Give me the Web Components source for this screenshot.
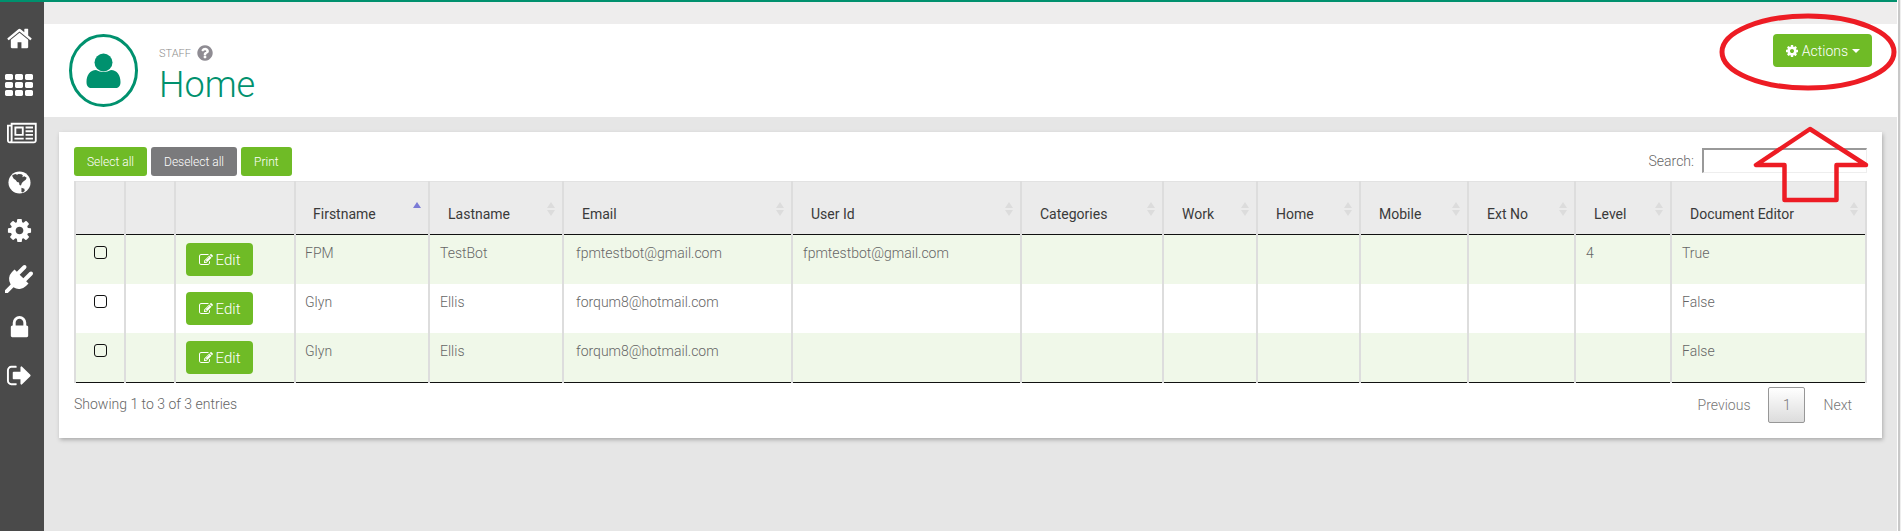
<!DOCTYPE html>
<html>
<head>
<meta charset="utf-8">
<title>Staff</title>
<style>
  html, body {
    margin: 0;
    height: 100%;
    overflow: hidden;
  }
  body {
    color: #666;
    font-family: Roboto, "Liberation Sans", sans-serif;
    font-size: 14px;
    font-weight: 300;
  }
</style>
</head>
<body>
<staff-app></staff-app>

<script>
const ICONS = {
  home: 'M1472 992v480q0 26-19 45t-45 19h-384v-384h-256v384h-384q-26 0-45-19t-19-45v-480q0-1 .5-3t.5-3l575-474 575 474q1 2 1 6zm223-69l-62 74q-8 9-21 11h-3q-13 0-21-7l-692-577-692 577q-12 8-24 7-13-2-21-11l-62-74q-8-10-7-23.5t11-21.5l719-599q32-26 76-26t76 26l244 204v-195q0-14 9-23t23-9h192q14 0 23 9t9 23v408l219 182q10 8 11 21.5t-7 23.5z',
  th: 'M512 1248v192q0 40-28 68t-68 28h-320q-40 0-68-28t-28-68v-192q0-40 28-68t68-28h320q40 0 68 28t28 68zm0-512v192q0 40-28 68t-68 28h-320q-40 0-68-28t-28-68v-192q0-40 28-68t68-28h320q40 0 68 28t28 68zm640 512v192q0 40-28 68t-68 28h-320q-40 0-68-28t-28-68v-192q0-40 28-68t68-28h320q40 0 68 28t28 68zm-640-1024v192q0 40-28 68t-68 28h-320q-40 0-68-28t-28-68v-192q0-40 28-68t68-28h320q40 0 68 28t28 68zm640 512v192q0 40-28 68t-68 28h-320q-40 0-68-28t-28-68v-192q0-40 28-68t68-28h320q40 0 68 28t28 68zm640 512v192q0 40-28 68t-68 28h-320q-40 0-68-28t-28-68v-192q0-40 28-68t68-28h320q40 0 68 28t28 68zm-640-1024v192q0 40-28 68t-68 28h-320q-40 0-68-28t-28-68v-192q0-40 28-68t68-28h320q40 0 68 28t28 68zm640 512v192q0 40-28 68t-68 28h-320q-40 0-68-28t-28-68v-192q0-40 28-68t68-28h320q40 0 68 28t28 68zm0-512v192q0 40-28 68t-68 28h-320q-40 0-68-28t-28-68v-192q0-40 28-68t68-28h320q40 0 68 28t28 68z',
  news: 'M1024 512h-384v384h384v-384zm128 640v128h-640v-128h640zm0-768v640h-640v-640h640zm640 768v128h-512v-128h512zm0-256v128h-512v-128h512zm0-256v128h-512v-128h512zm0-256v128h-512v-128h512zm-1536 960v-960h-128v960q0 26 19 45t45 19 45-19 19-45zm1664 0v-1088h-1536v1088q0 33-11 64h1483q26 0 45-19t19-45zm128-1216v1216q0 80-56 136t-136 56h-1664q-80 0-136-56t-56-136v-1088h256v-128h1792z',
  cog: 'M1152 896q0-106-75-181t-181-75-181 75-75 181 75 181 181 75 181-75 75-181zm512-109v222q0 12-8 23t-20 13l-185 28q-19 54-39 91 35 50 107 138 10 12 10 25t-9 23q-27 37-99 108t-94 71q-12 0-26-9l-138-108q-44 23-91 38-16 136-29 186-7 28-36 28h-222q-14 0-24.5-8.5t-11.5-21.5l-28-184q-49-16-90-37l-141 107q-10 9-25 9-14 0-25-11-126-114-165-168-7-10-7-23 0-12 8-23 15-21 51-66.5t54-70.5q-27-50-41-99l-183-27q-13-2-21-12.5t-8-23.5v-222q0-12 8-23t19-13l186-28q14-46 39-92-40-57-107-138-10-12-10-24 0-10 9-23 26-36 98.5-107.5t94.5-71.5q13 0 26 10l138 107q44-23 91-38 16-136 29-186 7-28 36-28h222q14 0 24.5 8.5t11.5 21.5l28 184q49 16 90 37l142-107q9-9 24-9 13 0 25 10 129 119 165 170 7 8 7 22 0 12-8 23-15 21-51 66.5t-54 70.5q26 50 41 98l183 28q13 2 21 12.5t8 23.5z',
  plug: 'M1755 453q37 38 37 90.5t-37 90.5l-401 400 150 150-160 160q-163 163-389.5 186.5t-411.5-100.5l-362 362h-181v-181l362-362q-124-185-100.5-411.5t186.5-389.5l160-160 150 150 400-401q38-37 91-37t90 37 37 90.5-37 90.5l-400 401 234 234 401-400q38-37 91-37t90 37z',
  lock: 'M640 768h512v-192q0-106-75-181t-181-75-181 75-75 181v192zm832 96v576q0 40-28 68t-68 28h-960q-40 0-68-28t-28-68v-576q0-40 28-68t68-28h32v-192q0-184 132-316t316-132 316 132 132 316v192h32q40 0 68 28t28 68z',
  signout: 'M704 1440q0 4 1 20t.5 26.5-3 23.5-10 19.5-20.5 6.5h-320q-119 0-203.5-84.5t-84.5-203.5v-704q0-119 84.5-203.5t203.5-84.5h320q13 0 22.5 9.5t9.5 22.5q0 4 1 20t.5 26.5-3 23.5-10 19.5-20.5 6.5h-320q-66 0-113 47t-47 113v704q0 66 47 113t113 47h312l11.5 1 11.5 3 8 5.5 7 9 2 13.5zm928-544q0 26-19 45l-544 544q-19 19-45 19t-45-19-19-45v-288h-448q-26 0-45-19t-19-45v-384q0-26 19-45t45-19h448v-288q0-26 19-45t45-19 45 19l544 544q19 19 19 45z',
  question: 'M1024 1376v-192q0-14-9-23t-23-9h-192q-14 0-23 9t-9 23v192q0 14 9 23t23 9h192q14 0 23-9t9-23zm256-672q0-88-55.5-163t-138.5-116-170-41q-243 0-371 213-15 24 8 42l132 100q7 6 19 6 16 0 25-12 53-68 86-92 34-24 86-24 48 0 85.5 26t37.5 59q0 38-20 61t-68 45q-63 28-115.5 86.5t-52.5 125.5v36q0 14 9 23t23 9h192q14 0 23-9t9-23q0-19 21.5-49.5t54.5-49.5q32-18 49-28.5t46-35 44.5-48 28-60.5 12.5-81zm384 192q0 209-103 385.5t-279.5 279.5-385.5 103-385.5-103-279.5-279.5-103-385.5 103-385.5 279.5-279.5 385.5-103 385.5 103 279.5 279.5 103 385.5z',
  edit: 'M888 1184l116-116-152-152-116 116v56h96v96h56zm440-720q-16-16-33 1l-350 350q-17 17-1 33t33-1l350-350q17-17 1-33zm80 594v190q0 119-84.5 203.5t-203.5 84.5h-832q-119 0-203.5-84.5t-84.5-203.5v-832q0-119 84.5-203.5t203.5-84.5h832q63 0 117 25 15 7 18 23 3 17-9 29l-49 49q-14 14-32 8-23-6-45-6h-832q-66 0-113 47t-47 113v832q0 66 47 113t113 47h832q66 0 113-47t47-113v-126q0-13 9-22l64-64q15-15 35-7t20 29zm-96-738l288 288-672 672h-288v-288zm444 132l-92 92-288-288 92-92q28-28 68-28t68 28l152 152q28 28 28 68t-28 68z',
};

function icon(name, size, width) {
  const w = width || 1792;
  return `<svg viewBox="0 0 ${w} 1792" width="${size * w / 1792}" height="${size}" fill="currentColor"><path d="${ICONS[name]}"/></svg>`;
}

// white disc with a dark north america on it
const GLOBE = `<svg viewBox="0 0 24 24" width="23" height="23">
  <circle cx="12" cy="12" r="11.500" fill="#fff"/>
  <path fill="#4a4a4a" d="M4.500 4.500l3-1.500 2 1 1.500-1 3 .5 1.500 1-.5 2 2-1 2.500 1.500-1 2-2.500 2-1.500 1.500-1 2.500-1.500-.5-.5-2.500-2-.5-1.500-2-2-1.500-1.500-2.500z"/>
  <path fill="#4a4a4a" d="M14 17.500l3 1 .5 2-2 2-1.500-.5z"/>
</svg>`;

class StaffSidebar extends HTMLElement {
  constructor() {
    super();
    const items = [
      icon('home', 27),
      icon('th', 28),
      icon('news', 26, 2048),
      GLOBE,
      icon('cog', 27),
      icon('plug', 28),
      icon('lock', 27),
      icon('signout', 27),
    ];
    this.attachShadow({mode: 'open'}).innerHTML = `
      <style>
        :host {
          background: #4a4a4a;
          box-sizing: border-box;
          color: #fff;
          display: flex;
          flex: 0 0 44px;
          flex-direction: column;
          padding: 12px 6px 0 0;
        }
        a {
          align-items: center;
          display: flex;
          height: 48.2px;
          justify-content: center;
        }
        a:nth-child(4) svg {
          margin-left: 6px;
        }
      </style>
      ${items.map(i => `<a>${i}</a>`).join('')}
    `;
  }
}
customElements.define('staff-sidebar', StaffSidebar);

class GreenButton extends HTMLElement {
  constructor() {
    super();
    this.attachShadow({mode: 'open'}).innerHTML = `
      <style>
        :host {
          align-items: center;
          background: #6fbb26;
          border-radius: 3px;
          box-sizing: border-box;
          color: #fff;
          display: inline-flex;
          font-size: 12px;
          font-weight: 300;
          gap: 4px;
          height: 29px;
          justify-content: center;
          padding: 0 13px;
          white-space: nowrap;
        }
        :host([gray]) {
          background: #7a7a7c;
        }
        :host([big]) {
          border-radius: 4px;
          font-size: 14px;
          height: 33px;
          padding: 0;
        }
      </style>
      <slot></slot>
    `;
  }
}
customElements.define('green-button', GreenButton);

class PageHeader extends HTMLElement {
  constructor() {
    super();
    this.attachShadow({mode: 'open'}).innerHTML = `
      <style>
        :host {
          align-items: flex-start;
          background: #fff;
          box-sizing: border-box;
          display: flex;
          height: 93px;
          padding: 10px 25px 0 25px;
        }
        .avatar {
          flex: none;
          margin-right: 21px;
        }
        .titles {
          flex: 1;
          padding-top: 11px;
        }
        .kicker {
          align-items: center;
          color: #8c8c8c;
          display: flex;
          font-size: 11px;
          gap: 5px;
          height: 16px;
        }
        .kicker svg {
          color: #8f8c93;
        }
        h1 {
          color: #00916e;
          font-size: 36px;
          font-weight: 300;
          line-height: 42px;
          margin: 3px 0 0 0;
        }
        green-button {
          gap: 3px;
          width: 99px;
        }
        svg {
          display: block;
        }
        .caret {
          border-left: 4px solid transparent;
          border-right: 4px solid transparent;
          border-top: 4px solid #fff;
          margin-left: 1px;
        }
      </style>
      <svg class="avatar" viewBox="0 0 69 73" width="69" height="73">
        <ellipse cx="34.500" cy="36.500" rx="33" ry="35" fill="none" stroke="#00916e" stroke-width="3"/>
        <circle cx="34.500" cy="28.500" r="9" fill="#00916e"/>
        <path fill="#00916e" d="M27 36q7.500 4 15 0c6 0 9.500 5 9.500 12 0 4-2 6-5 6h-24c-3 0-5-2-5-6 0-7 3.500-12 9.500-12z"/>
      </svg>
      <div class="titles">
        <div class="kicker"><span>STAFF</span>${icon('question', 18)}</div>
        <h1>Home</h1>
      </div>
      <green-button big>${icon('cog', 14)}<span>Actions</span><span class="caret"></span></green-button>
    `;
  }
}
customElements.define('page-header', PageHeader);

const COLUMNS = [
  ['', 50], ['', 50], ['', 120],
  ['Firstname', 134], ['Lastname', 134], ['Email', 229], ['User Id', 229],
  ['Categories', 142], ['Work', 94], ['Home', 103], ['Mobile', 108],
  ['Ext No', 107], ['Level', 96], ['Document Editor', 195],
];

const ROWS = [
  ['FPM', 'TestBot', 'fpmtestbot@gmail.com', 'fpmtestbot@gmail.com', '', '', '', '', '', '4', 'True'],
  ['Glyn', 'Ellis', 'forqum8@hotmail.com', '', '', '', '', '', '', '', 'False'],
  ['Glyn', 'Ellis', 'forqum8@hotmail.com', '', '', '', '', '', '', '', 'False'],
];

class StaffTable extends HTMLElement {
  constructor() {
    super();
    const head = COLUMNS.map(([label], i) => {
      if (!label) return '<th></th>';
      const cls = i == 3 ? 'sort asc' : 'sort';
      return `<th class="${cls}">${label}</th>`;
    }).join('');
    const body = ROWS.map(row => `
      <tr>
        <td class="check"><input type="checkbox"></td>
        <td></td>
        <td class="action"><green-button big>${icon('edit', 14)}<span>Edit</span></green-button></td>
        ${row.map(v => `<td>${v}</td>`).join('')}
      </tr>`).join('');
    this.attachShadow({mode: 'open'}).innerHTML = `
      <style>
        :host {
          display: block;
        }
        table {
          border-bottom: 1px solid #111;
          border-collapse: collapse;
          table-layout: fixed;
          width: 1793px;
        }
        th {
          background: #ebebeb;
          border-bottom: 1px solid #111;
          border-left: 2px solid #ddd;
          border-top: 1px solid #e2e2e2;
          box-sizing: border-box;
          color: #3a3a3a;
          font-weight: 400;
          height: 53px;
          padding: 12px 18px 0 18px;
          position: relative;
          text-align: left;
        }
        th:last-child, td:last-child {
          border-right: 2px solid #ddd;
        }
        th.sort::before, th.sort::after {
          border-left: 4px solid transparent;
          border-right: 4px solid transparent;
          content: '';
          position: absolute;
          right: 7px;
        }
        th.sort::before {
          border-bottom: 6px solid #dcdcdc;
          top: 20px;
        }
        th.sort::after {
          border-top: 6px solid #dcdcdc;
          top: 28px;
        }
        th.asc::before {
          border-bottom-color: #7b7bd6;
        }
        th.asc::after {
          display: none;
        }
        td {
          border-left: 2px solid #ddd;
          box-sizing: border-box;
          height: 49px;
          line-height: 20px;
          padding: 8px 10px;
          vertical-align: top;
        }
        td:nth-child(4) {
          padding-left: 9px;
        }
        th:nth-child(4) {
          padding-left: 17px;
        }
        td:nth-child(6) {
          padding-left: 12px;
        }
        tr:nth-child(odd) td {
          background: #f0f8e9;
        }
        td.action green-button {
          gap: 3px;
          width: 67px;
        }
        td.action span {
          font-size: 15px;
        }
        svg {
          display: block;
        }
        td.check {
          padding: 11px 0 0 18px;
        }
        input {
          appearance: none;
          border: 1.500px solid #111;
          border-radius: 3px;
          box-sizing: border-box;
          display: block;
          height: 13px;
          margin: 0;
          width: 13px;
        }
      </style>
      <table>
        <colgroup>${COLUMNS.map(c => `<col style="width:${c[1]}px">`).join('')}</colgroup>
        <thead><tr>${head}</tr></thead>
        <tbody>${body}</tbody>
      </table>
    `;
  }
}
customElements.define('staff-table', StaffTable);

class StaffCard extends HTMLElement {
  constructor() {
    super();
    this.attachShadow({mode: 'open'}).innerHTML = `
      <style>
        :host {
          background: #fff;
          box-shadow: 1px 2px 4px rgba(0, 0, 0, 0.25);
          box-sizing: border-box;
          display: block;
          height: 306px;
          margin: 15px 15px 0 15px;
          padding: 15px;
        }
        .tools {
          align-items: flex-start;
          display: flex;
          gap: 4px;
          height: 34px;
        }
        .search {
          align-items: center;
          color: #666;
          display: flex;
          gap: 8px;
          margin-left: auto;
          margin-top: 1px;
        }
        .search input {
          background: #fff;
          border: solid #eee;
          border-color: #999 #eee #eee #999;
          border-width: 2px 1px 1px 2px;
          box-sizing: border-box;
          height: 25px;
          margin: 0;
          width: 165px;
        }
        .foot {
          align-items: flex-start;
          display: flex;
          justify-content: space-between;
        }
        .info {
          line-height: 20px;
          padding-top: 11px;
        }
        .pages {
          align-items: center;
          color: #777;
          display: flex;
          margin-top: 4px;
          padding-right: 15px;
        }
        .pages b {
          background: linear-gradient(#fff, #dcdcdc);
          border: 1px solid #979797;
          border-radius: 2px;
          box-sizing: border-box;
          font-weight: 300;
          height: 36px;
          line-height: 34px;
          margin: 0 18px;
          text-align: center;
          width: 37px;
        }
      </style>
      <div class="tools">
        <green-button>Select all</green-button>
        <green-button gray>Deselect all</green-button>
        <green-button>Print</green-button>
        <label class="search">Search: <input></label>
      </div>
      <staff-table></staff-table>
      <div class="foot">
        <div class="info">Showing 1 to 3 of 3 entries</div>
        <div class="pages"><span>Previous</span><b>1</b><span>Next</span></div>
      </div>
    `;
  }
}
customElements.define('staff-card', StaffCard);

class StaffApp extends HTMLElement {
  constructor() {
    super();
    this.attachShadow({mode: 'open'}).innerHTML = `
      <style>
        :host {
          display: flex;
          height: 531px;
          position: relative;
          width: 1901px;
        }
        .frame {
          border-top: 2px solid #00916e;
          display: flex;
          flex: 1;
        }
        main {
          background: #e6e6e6;
          flex: 1;
        }
        main::before {
          background: #eeeded;
          content: '';
          display: block;
          height: 22px;
        }
        .edge {
          background: #c8c8c8;
          border-left: 1px solid #fff;
          border-right: 1px solid #eee;
          box-sizing: border-box;
          flex: 0 0 4px;
        }
        /* hand drawn markup on top of the screenshot */
        .markup {
          left: 0;
          pointer-events: none;
          position: absolute;
          top: 0;
        }
      </style>
      <div class="frame">
        <staff-sidebar></staff-sidebar>
        <main>
          <page-header></page-header>
          <staff-card></staff-card>
        </main>
      </div>
      <div class="edge"></div>
      <svg class="markup" width="1901" height="531" fill="none" stroke="#ed1c24">
        <ellipse cx="1808" cy="52" rx="86" ry="36" stroke-width="5"/>
        <path d="M1810 129L1756 165H1784.500V200H1836.500V165H1866Z" stroke-width="4.500" stroke-linejoin="round"/>
      </svg>
    `;
  }
}
customElements.define('staff-app', StaffApp);
</script>
</body>
</html>
